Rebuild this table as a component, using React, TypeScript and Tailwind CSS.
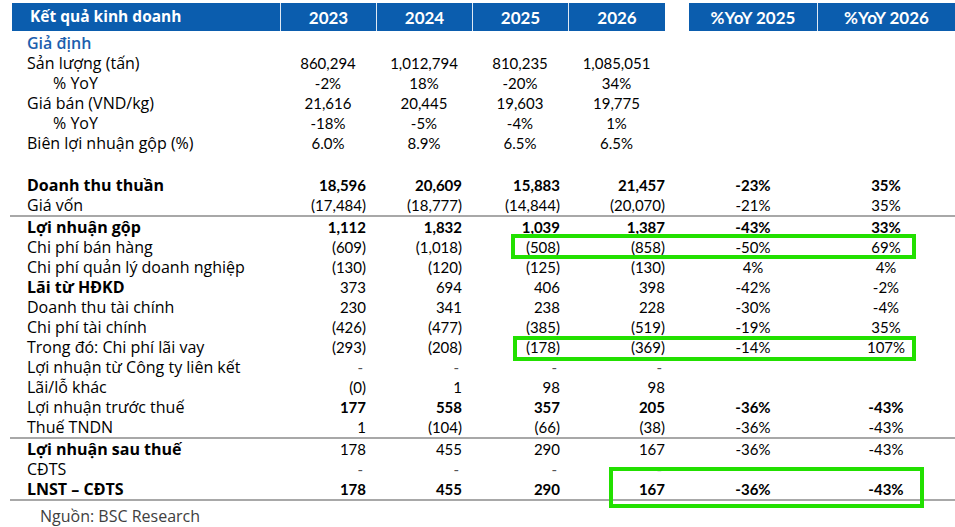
import React from "react";

type Cell = string;
type RowDef = {
  label: string;
  vals?: Cell[];
  yoy?: Cell[];
  labelBold?: boolean;
  numBold?: boolean;
  indent?: boolean;
  center?: boolean;
  blue?: boolean;
  h?: string;
};

const W = {
  lead: "w-[12px]",
  label: "w-[268px]",
  c23: "w-[96px]",
  c24: "w-[96px]",
  c25: "w-[96px]",
  c26: "w-[97px]",
  gap: "w-[24px]",
  y25: "w-[128px]",
  y26: "w-[138px]",
};

const rightPads = ["pr-[10px]", "pr-[10px]", "pr-[8px]", "pr-[0px]"];
const colW = [W.c23, W.c24, W.c25, W.c26];
const labelFont = { fontFamily: "'Open Sans', 'Noto Sans', sans-serif" };

function Row({ r }: { r: RowDef }) {
  const numCls = r.numBold ? "font-bold" : "font-normal";
  return (
    <div className={`flex items-center ${r.h ?? "h-[20px]"} text-[15px] leading-none text-black`}>
      <div className={`${W.lead} shrink-0`} />
      <div
        style={labelFont}
        className={`${W.label} shrink-0 whitespace-nowrap text-[16px] ${r.indent ? "pl-[41px]" : "pl-[15px]"} ${
          r.labelBold ? "font-bold" : ""
        } ${r.blue ? "text-[#1c5fae] font-semibold" : ""}`}
      >
        {r.label}
      </div>
      {colW.map((w, i) => {
        const v = r.vals ? r.vals[i] : "";
        const isDash = v === "-";
        return (
          <div
            key={i}
            className={`${w} shrink-0 whitespace-nowrap ${numCls} ${
              r.center ? "text-center" : `text-right ${rightPads[i]}`
            }`}
          >
            {isDash ? <span className="pr-[3px] text-[#555]">-</span> : v}
          </div>
        );
      })}
      <div className={`${W.gap} shrink-0`} />
      <div className={`${W.y25} shrink-0 text-center ${numCls}`}>{r.yoy ? r.yoy[0] : ""}</div>
      <div className={`${W.y26} shrink-0 text-center ${numCls}`}>{r.yoy ? r.yoy[1] : ""}</div>
    </div>
  );
}

function Line() {
  return <div className="ml-[10px] h-[2px] bg-[#a8a8a8]" />;
}

const top: RowDef[] = [
  { label: "Giả định", blue: true },
  { label: "Sản lượng (tấn)", vals: ["860,294", "1,012,794", "810,235", "1,085,051"], center: true },
  { label: "% YoY", vals: ["-2%", "18%", "-20%", "34%"], center: true, indent: true },
  { label: "Giá bán (VND/kg)", vals: ["21,616", "20,445", "19,603", "19,775"], center: true },
  { label: "% YoY", vals: ["-18%", "-5%", "-4%", "1%"], center: true, indent: true },
  { label: "Biên lợi nhuận gộp (%)", vals: ["6.0%", "8.9%", "6.5%", "6.5%"], center: true },
];

const mid1: RowDef[] = [
  { label: "Doanh thu thuần", vals: ["18,596", "20,609", "15,883", "21,457"], yoy: ["-23%", "35%"], labelBold: true, numBold: true },
  { label: "Giá vốn", vals: ["(17,484)", "(18,777)", "(14,844)", "(20,070)"], yoy: ["-21%", "35%"] },
];

const mid2: RowDef[] = [
  { label: "Lợi nhuận gộp", vals: ["1,112", "1,832", "1,039", "1,387"], yoy: ["-43%", "33%"], labelBold: true, numBold: true },
  { label: "Chi phí bán hàng", vals: ["(609)", "(1,018)", "(508)", "(858)"], yoy: ["-50%", "69%"] },
  { label: "Chi phí quản lý doanh nghiệp", vals: ["(130)", "(120)", "(125)", "(130)"], yoy: ["4%", "4%"] },
  { label: "Lãi từ HĐKD", vals: ["373", "694", "406", "398"], yoy: ["-42%", "-2%"], labelBold: true },
  { label: "Doanh thu tài chính", vals: ["230", "341", "238", "228"], yoy: ["-30%", "-4%"] },
  { label: "Chi phí tài chính", vals: ["(426)", "(477)", "(385)", "(519)"], yoy: ["-19%", "35%"] },
  { label: "Trong đó: Chi phí lãi vay", vals: ["(293)", "(208)", "(178)", "(369)"], yoy: ["-14%", "107%"] },
  { label: "Lợi nhuận từ Công ty liên kết", vals: ["-", "-", "-", "-"] },
  { label: "Lãi/lỗ khác", vals: ["(0)", "1", "98", "98"] },
  { label: "Lợi nhuận trước thuế", vals: ["177", "558", "357", "205"], yoy: ["-36%", "-43%"], numBold: true },
  { label: "Thuế TNDN", vals: ["1", "(104)", "(66)", "(38)"], yoy: ["-36%", "-43%"] },
];

const bottom: RowDef[] = [
  { label: "Lợi nhuận sau thuế", vals: ["178", "455", "290", "167"], yoy: ["-36%", "-43%"], labelBold: true },
  { label: "CĐTS", vals: ["-", "-", "-", "-"] },
  { label: "LNST – CĐTS", vals: ["178", "455", "290", "167"], yoy: ["-36%", "-43%"], labelBold: true, numBold: true },
];

export default function App() {
  return (
    <div
      className="relative w-[955px] h-[527px] bg-white overflow-hidden"
      style={{ fontFamily: "Lato, 'Noto Sans', 'Liberation Sans', sans-serif" }}
    >
      <div className="pt-[3px]">
        {/* header */}
        <div className="flex h-[28px] text-white font-bold text-[16px] leading-none">
          <div className={`${W.lead} shrink-0`} />
          <div style={labelFont} className={`${W.label} shrink-0 bg-[#0b5dae] flex items-center pl-[18px] text-[15.5px]`}>Kết quả kinh doanh</div>
          <div className={`${W.c23} shrink-0 bg-[#0b5dae] border-l border-[#dfe9f4] flex items-center justify-center text-[17px]`}>2023</div>
          <div className={`${W.c24} shrink-0 bg-[#0b5dae] border-l border-[#dfe9f4] flex items-center justify-center text-[17px]`}>2024</div>
          <div className={`${W.c25} shrink-0 bg-[#0b5dae] border-l border-[#dfe9f4] flex items-center justify-center text-[17px]`}>2025</div>
          <div className={`${W.c26} shrink-0 bg-[#0b5dae] border-l border-[#dfe9f4] flex items-center justify-center text-[17px]`}>2026</div>
          <div className={`${W.gap} shrink-0`} />
          <div className={`${W.y25} shrink-0 bg-[#0b5dae] flex items-center justify-center text-[17px]`}>%YoY 2025</div>
          <div className={`${W.y26} shrink-0 bg-[#0b5dae] border-l border-[#dfe9f4] flex items-center justify-center text-[17px]`}>%YoY 2026</div>
        </div>
        <div className="h-[2px]" />
        {top.map((r, i) => (
          <Row key={"t" + i} r={r} />
        ))}
        <div className="h-[22px]" />
        {mid1.map((r, i) => (
          <Row key={"m" + i} r={r} />
        ))}
        <Line />
        {mid2.map((r, i) => (
          <Row key={"n" + i} r={r} />
        ))}
        <Line />
        {bottom.map((r, i) => (
          <Row key={"b" + i} r={r} />
        ))}
        <Line />
        <div style={labelFont} className="h-[30px] flex items-center pl-[40px] text-[16px] text-[#404040]">
          Nguồn: BSC Research
        </div>
      </div>

      {/* highlight boxes */}
      <div className="absolute left-[511px] top-[234px] w-[405px] h-[25px] border-[4px] border-[#22e000]" />
      <div className="absolute left-[513px] top-[336px] w-[403px] h-[25px] border-[4px] border-[#22e000]" />
      <div className="absolute left-[609px] top-[467px] w-[315px] h-[41px] border-[4px] border-[#22e000]" />
    </div>
  );
}
